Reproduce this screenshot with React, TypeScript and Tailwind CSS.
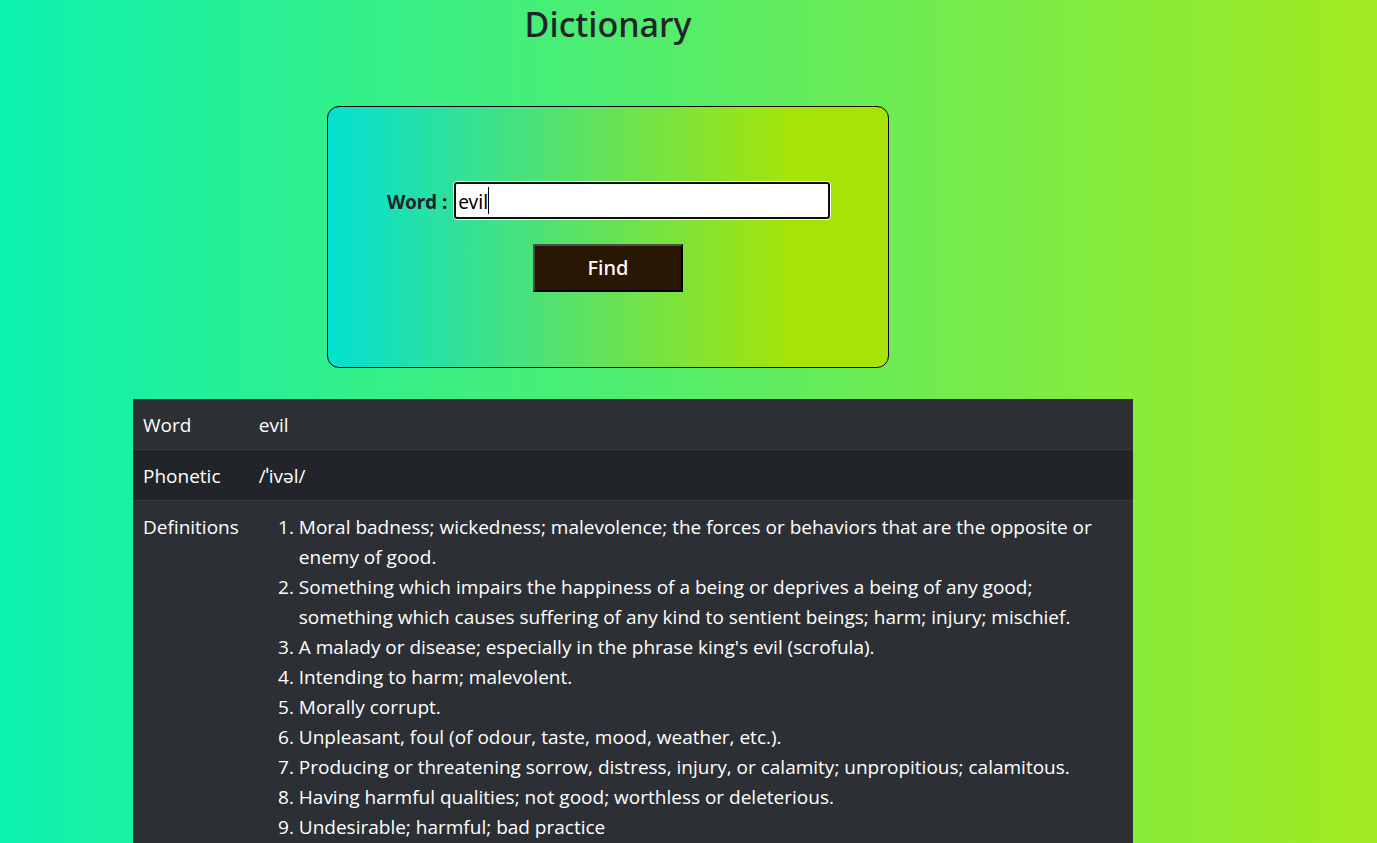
import { useState } from "react";

const initialWord = "evil";

const definitions = [
  "Moral badness; wickedness; malevolence; the forces or behaviors that are the opposite or enemy of good.",
  "Something which impairs the happiness of a being or deprives a being of any good; something which causes suffering of any kind to sentient beings; harm; injury; mischief.",
  "A malady or disease; especially in the phrase king's evil (scrofula).",
  "Intending to harm; malevolent.",
  "Morally corrupt.",
  "Unpleasant, foul (of odour, taste, mood, weather, etc.).",
  "Producing or threatening sorrow, distress, injury, or calamity; unpropitious; calamitous.",
  "Having harmful qualities; not good; worthless or deleterious.",
  "Undesirable; harmful; bad practice",
];

function SearchCard() {
  const [word, setWord] = useState(initialWord);
  return (
    <form
      onSubmit={(e) => e.preventDefault()}
      className="flex w-full max-w-[562px] flex-col items-center gap-6 rounded-xl border border-black bg-[linear-gradient(to_right,#03e0d2,#a6e407_83%)] px-14 pt-[74px] pb-[75px]"
    >
      <div className="flex w-full items-center gap-1.5 pr-px pl-[3px]">
        <label htmlFor="word" className="shrink-0 pt-0.5 font-bold">
          Word :
        </label>
        <div className="relative min-w-0 flex-1">
          <input
            id="word"
            type="text"
            value={word}
            onChange={(e) => setWord(e.target.value)}
            className="block h-[39px] w-full rounded-sm border border-white bg-white px-1 pt-0.5 text-black outline-2 -outline-offset-3 outline-[#101010]"
          />
          {word === initialWord && (
            <span
              aria-hidden="true"
              className="pointer-events-none absolute top-1.5 left-[35px] h-[27px] w-px bg-black"
            />
          )}
        </div>
      </div>
      <button
        type="submit"
        className="h-12 w-[150px] border-2 border-t-[#4d4d4d] border-r-black border-b-black border-l-[#4d4d4d] bg-[#291704] text-xl font-medium text-white"
      >
        Find
      </button>
    </form>
  );
}

export default function App() {
  return (
    <div className="h-screen overflow-hidden bg-[linear-gradient(to_right,#0df2b0,#56ed68_50%,#a3ea20)] font-['Noto_Sans','Open_Sans',sans-serif] text-[19px] leading-[30px] text-[#212529]">
      <main>
        <div className="flex flex-col items-center pr-[161px]">
          <h1 className="mb-[58px] text-[34px] leading-12 font-medium">Dictionary</h1>
          <SearchCard />
        </div>
        <div className="mt-[31px] pl-[133px]">
          <table className="w-full max-w-[1000px] border-collapse text-left font-['Open_Sans','Noto_Sans',sans-serif] text-white">
            <tbody className="align-top">
              <tr className="border-b border-[#373b3e] bg-[#2c3034]">
                <th scope="row" className="w-[115px] px-2.5 pt-[11px] pb-[9px] font-normal">Word</th>
                <td className="px-2.5 pt-[11px] pb-[9px]">{initialWord}</td>
              </tr>
              <tr className="border-b border-[#373b3e] bg-[#212529]">
                <th scope="row" className="px-2.5 pt-[11px] pb-[9px] font-normal">Phonetic</th>
                <td className="px-2.5 pt-[11px] pb-[9px]">/ˈivəl/</td>
              </tr>
              <tr className="bg-[#2c3034]">
                <th scope="row" className="px-2.5 pt-[11px] pb-[9px] font-normal">Definitions</th>
                <td className="px-2.5 pt-[11px] pb-[9px]">
                  <ol className="list-decimal pl-10">
                    {definitions.map((text) => (
                      <li key={text}>{text}</li>
                    ))}
                  </ol>
                </td>
              </tr>
            </tbody>
          </table>
        </div>
      </main>
    </div>
  );
}
